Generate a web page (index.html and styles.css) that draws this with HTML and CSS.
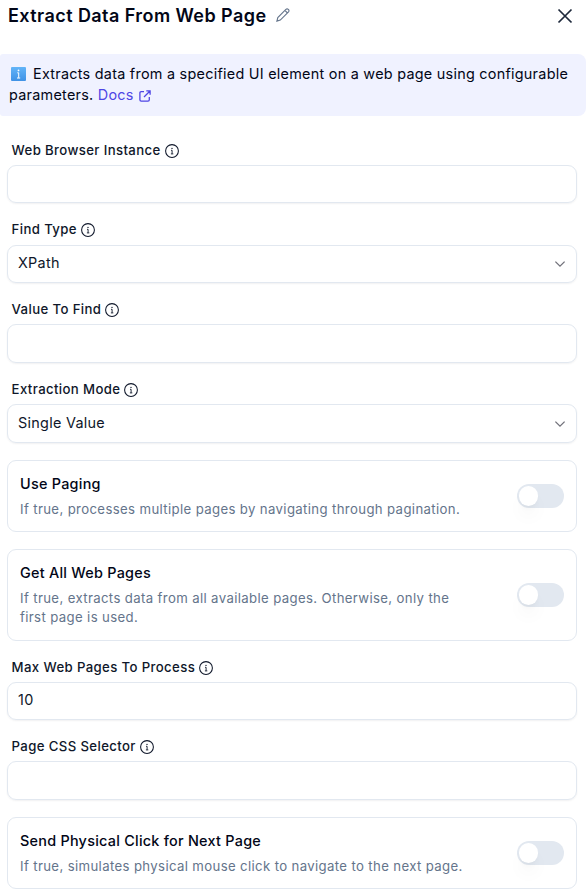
FILE: index.html
```html
<!DOCTYPE html>
<html lang="en">
<head>
<meta charset="utf-8">
<title>Extract Data From Web Page</title>
<link rel="stylesheet" href="styles.css">
</head>
<body>
<svg width="0" height="0" class="sprite" aria-hidden="true">
  <symbol id="info" viewBox="0 0 14 14"><circle cx="7" cy="7" r="6.4" fill="none" stroke="currentColor" stroke-width="1.05"/><path d="M6 6.3H7.1V9.8M5.9 9.9H8.3" fill="none" stroke="currentColor" stroke-width=".9"/><circle cx="7" cy="4.4" r=".7" fill="currentColor"/></symbol>
  <symbol id="chevron" viewBox="0 0 12 8"><path d="M1.4 1.6L6 6.1L10.6 1.6" fill="none" stroke="currentColor" stroke-width="1.3"/></symbol>
</svg>
<header class="header">
  <h1 class="title">Extract Data From Web Page</h1>
  <svg class="pencil" viewBox="0 0 14 14"><path d="M.9 13.1L1.8 9.5L9.9 1.4C11.5 -.1 13.9 2.2 12.5 3.9L4.3 12.1ZM8.9 2.4L11.5 5" /></svg>
  <svg class="close" viewBox="0 0 16 16"><path d="M1.5 1.5L14.5 14.5M14.5 1.5L1.5 14.5"/></svg>
</header>
<div class="notice">
  <svg class="badge" viewBox="0 0 15 14"><defs><linearGradient id="blue" x2="0" y2="1"><stop stop-color="#62b4f8"/><stop offset="1" stop-color="#3f92e6"/></linearGradient></defs><rect width="15" height="14" rx="1" fill="url(#blue)"/><circle cx="7.5" cy="3.4" r=".9" fill="#fff"/><path d="M6.3 5.8H7.7V10.8M6 11H9.2" fill="none" stroke="#fff" stroke-width="1"/></svg>Extracts data from a specified UI element on a web page using configurable<br>parameters. <a class="docs">Docs<svg class="external" viewBox="0 0 12 12"><path d="M5 1.7H2.2Q.9 1.7 .9 3V9.8Q.9 11.1 2.2 11.1H9Q10.3 11.1 10.3 9.8V7M7.3.9H11.1V4.7M11 1L5 7"/></svg></a>
</div>
<main class="form">
  <div class="field"><label class="label">Web Browser Instance<svg class="info"><use href="#info"/></svg></label><div class="control"></div></div>
  <div class="field"><label class="label">Find Type<svg class="info"><use href="#info"/></svg></label><div class="control">XPath<svg class="chevron"><use href="#chevron"/></svg></div></div>
  <div class="field"><label class="label">Value To Find<svg class="info"><use href="#info"/></svg></label><div class="control tall"></div></div>
  <div class="field"><label class="label">Extraction Mode<svg class="info"><use href="#info"/></svg></label><div class="control tall">Single Value<svg class="chevron"><use href="#chevron"/></svg></div></div>
  <section class="card"><div class="copy"><h2 class="name">Use Paging</h2><p class="hint">If true, processes multiple pages by navigating through pagination.</p></div><span class="switch"></span></section>
  <section class="card"><div class="copy"><h2 class="name">Get All Web Pages</h2><p class="hint">If true, extracts data from all available pages. Otherwise, only the first page is used.</p></div><span class="switch"></span></section>
  <div class="field"><label class="label">Max Web Pages To Process<svg class="info"><use href="#info"/></svg></label><div class="control">10</div></div>
  <div class="field"><label class="label">Page CSS Selector<svg class="info"><use href="#info"/></svg></label><div class="control tall"></div></div>
  <section class="card"><div class="copy"><h2 class="name">Send Physical Click for Next Page</h2><p class="hint">If true, simulates physical mouse click to navigate to the next page.</p></div><span class="switch"></span></section>
</main>
</body>
</html>
```
FILE: styles.css
```css
* { box-sizing: border-box; }
body { margin: 0; height: 892px; overflow: hidden; background: #fff; color: #0f172a; font-family: Inter, sans-serif; }
h1, h2, p { margin: 0; }
.sprite { display: none; }
.header { display: flex; align-items: center; height: 54px; padding: 0 13px 22px 8px; }
.title { font-size: 18px; line-height: 24px; font-weight: 600; letter-spacing: .43px; color: #020617; white-space: nowrap; }
.pencil { width: 14px; height: 14px; margin: -2px 0 0 10px; fill: none; stroke: #64748b; stroke-width: 1.1; }
.close { width: 16px; height: 16px; margin-left: auto; fill: none; stroke: #1e293b; stroke-width: 1.7; }
.notice { height: 62px; padding: 8.5px 0 0 9px; border-radius: 3px 8px 8px 3px; background: #f0f2ff; color: #020617; font-size: 14.4px; line-height: 21px; letter-spacing: .26px; white-space: nowrap; }
.badge { width: 15px; height: 14px; margin: 0 7px 0 2px; vertical-align: -2px; }
.docs { color: #4f46e5; }
.external { width: 12px; height: 12px; margin-left: 5.5px; vertical-align: -2px; fill: none; stroke: currentColor; stroke-width: 1.3; }
.form { display: grid; grid-template-rows: 62px 63px 63px 63px 72px 92px 62px 63px 72px; gap: 17px; padding: 25px 9px 0 7px; }
.field { display: flex; flex-direction: column; justify-content: space-between; }
.label { display: flex; align-items: center; height: 18px; padding-left: 4.6px; font-size: 13.2px; font-weight: 500; letter-spacing: .37px; }
.info { width: 14px; height: 14px; margin: 1px 0 0 4px; }
.control { display: flex; align-items: center; height: 38px; padding: 0 10px 3px; border: 1px solid #e2e8f0; border-radius: 9px; box-shadow: 0 1px 2px rgba(15, 23, 42, .06); font-size: 14.4px; letter-spacing: .28px; }
.tall { height: 39px; padding-bottom: 2px; }
.chevron { width: 12px; height: 8px; margin: 2px 0 0 auto; color: #71717a; }
.card { display: flex; align-items: center; justify-content: space-between; padding: 0 12px; border: 1px solid #e2e8f0; border-radius: 9px; }
.copy { width: 450px; }
.name { font-size: 14.4px; line-height: 20px; font-weight: 500; letter-spacing: .26px; color: #020617; }
.hint { margin-top: 6px; font-size: 13.2px; line-height: 19px; letter-spacing: .36px; color: #64748b; }
.switch { width: 47px; height: 24px; padding: 2px; border-radius: 12px; background: #e2e8f0; }
.switch::before { content: ""; display: block; width: 19px; height: 20px; border-radius: 10px; background: #fff; box-shadow: 0 12px 18px -3px rgba(0, 0, 0, .06), 0 4px 7px -4px rgba(0, 0, 0, .08); }
```
